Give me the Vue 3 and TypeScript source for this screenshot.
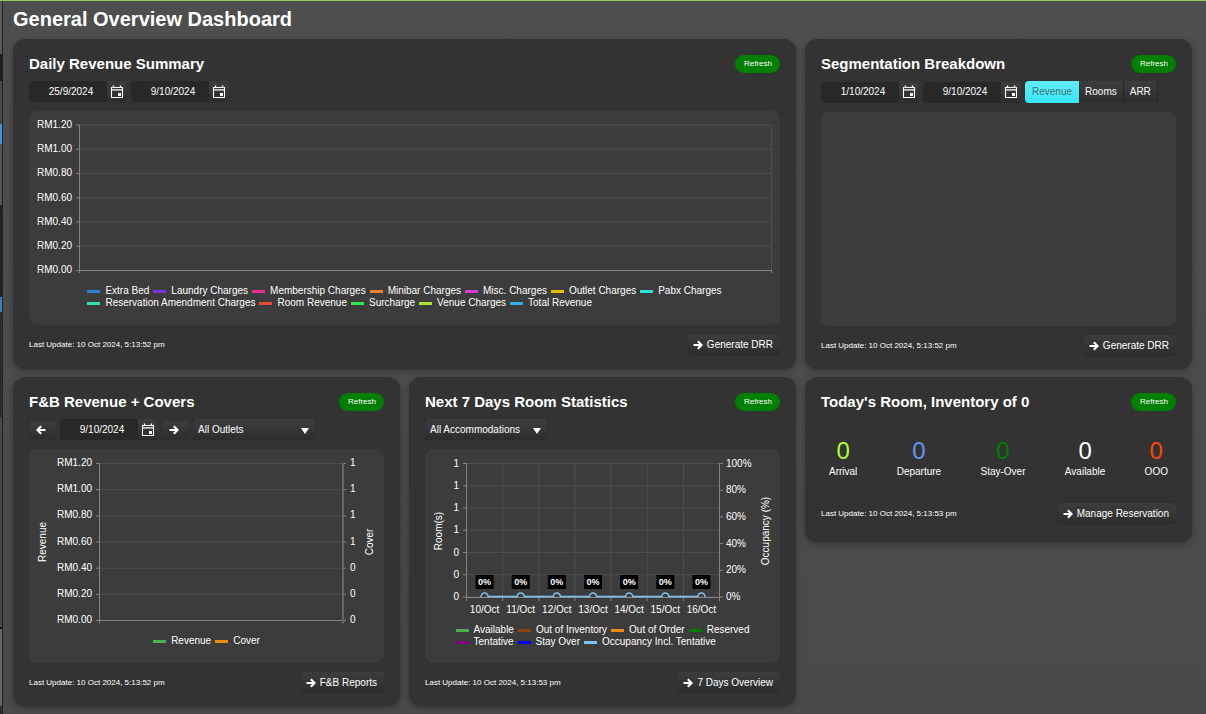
<script setup lang="ts">
import { ref } from 'vue'

interface LegendEntry {
  label: string
  color: string
}

const dailyFrom = ref('25/9/2024')
const dailyTo = ref('9/10/2024')
const segmentFrom = ref('1/10/2024')
const segmentTo = ref('9/10/2024')
const outletDate = ref('9/10/2024')
const outlet = ref('All Outlets')
const accommodation = ref('All Accommodations')

const segments: string[] = ['Revenue', 'Rooms', 'ARR']
const activeSegment = ref('Revenue')

const moneyLabels: string[] = ['RM1.20', 'RM1.00', 'RM0.80', 'RM0.60', 'RM0.40', 'RM0.20', 'RM0.00']
const coverLabels: string[] = ['1', '1', '1', '1', '0', '0', '0']
const percentLabels: string[] = ['100%', '80%', '60%', '40%', '20%', '0%']
const days: string[] = ['10/Oct', '11/Oct', '12/Oct', '13/Oct', '14/Oct', '15/Oct', '16/Oct']

const dailyLegend: LegendEntry[][] = [
  [
    { label: 'Extra Bed', color: '#2f7ed8' },
    { label: 'Laundry Charges', color: '#7d33e0' },
    { label: 'Membership Charges', color: '#e8308c' },
    { label: 'Minibar Charges', color: '#e8812e' },
    { label: 'Misc. Charges', color: '#e035d8' },
    { label: 'Outlet Charges', color: '#e6bd10' },
    { label: 'Pabx Charges', color: '#2fe0e0' },
  ],
  [
    { label: 'Reservation Amendment Charges', color: '#2fe0b5' },
    { label: 'Room Revenue', color: '#e84c2e' },
    { label: 'Surcharge', color: '#2fe84c' },
    { label: 'Venue Charges', color: '#a8e62e' },
    { label: 'Total Revenue', color: '#2fb4e8' },
  ],
]

const outletLegend: LegendEntry[][] = [
  [
    { label: 'Revenue', color: '#4caf50' },
    { label: 'Cover', color: '#f08a0c' },
  ],
]

const roomLegend: LegendEntry[][] = [
  [
    { label: 'Available', color: '#4caf50' },
    { label: 'Out of Inventory', color: '#8b4513' },
    { label: 'Out of Order', color: '#f08a0c' },
    { label: 'Reserved', color: '#007d00' },
  ],
  [
    { label: 'Tentative', color: '#800080' },
    { label: 'Stay Over', color: '#0000f5' },
    { label: 'Occupancy Incl. Tentative', color: '#7cc4f5' },
  ],
]

const stats = [
  { label: 'Arrival', value: 0, tone: 'lime' },
  { label: 'Departure', value: 0, tone: 'blue' },
  { label: 'Stay-Over', value: 0, tone: 'green' },
  { label: 'Available', value: 0, tone: 'white' },
  { label: 'OOO', value: 0, tone: 'orange' },
]

const dayX = (i: number): number => 41.5 + (253 / 7) * (i + 0.5)
const occupancyPath: string =
  'M55.5 147.5 ' +
  days.map((_, i) => `H${dayX(i) - 3.5} a3.5 3.5 0 0 1 7 0`).join(' ') +
  ` H${dayX(6) + 4}`
</script>

<template>
  <div class="shell">
    <svg class="defs" width="0" height="0" aria-hidden="true">
      <symbol id="cal" viewBox="0 0 14 14">
        <path d="M1.5 2.5H12.5V12.5H1.5Z" fill="none" stroke="currentColor" stroke-width="1.1" />
        <path d="M1.5 4.9H12.5" stroke="currentColor" stroke-width="1.1" />
        <path d="M3.5 0.5V3M10.5 0.5V3" stroke="currentColor" stroke-width="1.4" />
        <path d="M8 8H11V11H8Z" fill="currentColor" />
      </symbol>
      <symbol id="arrow" viewBox="0 0 10 10">
        <path d="M0.5 5H8.4M4.8 1.2L8.6 5L4.8 8.8" fill="none" stroke="currentColor" stroke-width="2.1" />
      </symbol>
    </svg>

    <aside class="rail"></aside>

    <main class="page">
      <h1>General Overview Dashboard</h1>

      <div class="grid">
        <section class="card wide">
          <header>
            <h2>Daily Revenue Summary</h2>
            <button type="button" class="refresh">Refresh</button>
          </header>
          <div class="controls">
            <div class="date">
              <input v-model="dailyFrom" type="text" aria-label="From date" />
              <button type="button" aria-label="Open calendar"><svg><use href="#cal" /></svg></button>
            </div>
            <div class="date">
              <input v-model="dailyTo" type="text" aria-label="To date" />
              <button type="button" aria-label="Open calendar"><svg><use href="#cal" /></svg></button>
            </div>
          </div>
          <div class="panel">
            <svg class="chart" viewBox="0 0 751 174">
              <g v-for="(label, i) in moneyLabels" :key="i">
                <line class="gridline" x1="51" x2="742" :y1="14 + i * 24.25" :y2="14 + i * 24.25" />
                <line class="axis" x1="47" x2="51" :y1="14 + i * 24.25" :y2="14 + i * 24.25" />
                <text x="43" :y="17 + i * 24.2" text-anchor="end">{{ label }}</text>
              </g>
              <path class="gridline" d="M742.5 14V159" />
              <path class="axis" d="M50.5 14V162M50 159.5H743M742.5 159V162" />
            </svg>
            <div class="legend">
              <div v-for="(row, r) in dailyLegend" :key="r" class="legend-row">
                <span v-for="item in row" :key="item.label"><i :style="{ background: item.color }"></i>{{ item.label }}</span>
              </div>
            </div>
          </div>
          <footer>
            <small>Last Update: 10 Oct 2024, 5:13:52 pm</small>
            <button type="button" class="action"><svg><use href="#arrow" /></svg>Generate DRR</button>
          </footer>
        </section>

        <section class="card">
          <header>
            <h2>Segmentation Breakdown</h2>
            <button type="button" class="refresh">Refresh</button>
          </header>
          <div class="controls">
            <div class="date">
              <input v-model="segmentFrom" type="text" aria-label="From date" />
              <button type="button" aria-label="Open calendar"><svg><use href="#cal" /></svg></button>
            </div>
            <div class="date">
              <input v-model="segmentTo" type="text" aria-label="To date" />
              <button type="button" aria-label="Open calendar"><svg><use href="#cal" /></svg></button>
            </div>
            <div class="segments">
              <button
                v-for="name in segments"
                :key="name"
                type="button"
                :class="{ active: name === activeSegment }"
                @click="activeSegment = name"
              >{{ name }}</button>
            </div>
          </div>
          <div class="panel"></div>
          <footer>
            <small>Last Update: 10 Oct 2024, 5:13:52 pm</small>
            <button type="button" class="action"><svg><use href="#arrow" /></svg>Generate DRR</button>
          </footer>
        </section>

        <section class="card">
          <header>
            <h2>F&amp;B Revenue + Covers</h2>
            <button type="button" class="refresh">Refresh</button>
          </header>
          <div class="controls">
            <button type="button" class="step" aria-label="Previous day"><svg class="flip"><use href="#arrow" /></svg></button>
            <div class="date">
              <input v-model="outletDate" type="text" aria-label="Date" />
              <button type="button" aria-label="Open calendar"><svg><use href="#cal" /></svg></button>
            </div>
            <button type="button" class="step" aria-label="Next day"><svg><use href="#arrow" /></svg></button>
            <select v-model="outlet" aria-label="Outlet">
              <option>All Outlets</option>
            </select>
          </div>
          <div class="panel">
            <svg class="chart" viewBox="0 0 355 186">
              <g v-for="(label, i) in moneyLabels" :key="i">
                <line class="gridline" x1="71" x2="313" :y1="14.5 + i * 26.17" :y2="14.5 + i * 26.17" />
                <path class="axis" :d="`M67 ${14.5 + i * 26.17}H71M314 ${14.5 + i * 26.17}H317`" />
                <text x="63" :y="17 + i * 26.17" text-anchor="end">{{ label }}</text>
                <text x="321" :y="17 + i * 26.17">{{ coverLabels[i] }}</text>
              </g>
              <path class="axis" d="M70.5 14V174.5M70 171.5H317" />
              <path class="axis-wide" d="M314 14V174.5" />
              <text transform="translate(17 93) rotate(-90)" text-anchor="middle">Revenue</text>
              <text transform="translate(344 93) rotate(-90)" text-anchor="middle">Cover</text>
            </svg>
            <div class="legend">
              <div v-for="(row, r) in outletLegend" :key="r" class="legend-row">
                <span v-for="item in row" :key="item.label"><i :style="{ background: item.color }"></i>{{ item.label }}</span>
              </div>
            </div>
          </div>
          <footer>
            <small>Last Update: 10 Oct 2024, 5:13:52 pm</small>
            <button type="button" class="action"><svg><use href="#arrow" /></svg>F&amp;B Reports</button>
          </footer>
        </section>

        <section class="card">
          <header>
            <h2>Next 7 Days Room Statistics</h2>
            <button type="button" class="refresh">Refresh</button>
          </header>
          <div class="controls">
            <select v-model="accommodation" aria-label="Accommodation">
              <option>All Accommodations</option>
            </select>
          </div>
          <div class="panel">
            <svg class="chart" viewBox="0 0 355 175">
              <g v-for="(label, i) in coverLabels" :key="i">
                <line class="gridline" x1="42" x2="294" :y1="14.5 + i * 22.25" :y2="14.5 + i * 22.25" />
                <line class="axis" x1="38" x2="42" :y1="14.5 + i * 22.25" :y2="14.5 + i * 22.25" />
                <text x="34" :y="17.5 + i * 22.25" text-anchor="end">{{ label }}</text>
              </g>
              <g v-for="(label, i) in percentLabels" :key="label">
                <line class="axis" x1="294" x2="298" :y1="14.5 + i * 26.7" :y2="14.5 + i * 26.7" />
                <text x="301" :y="17.5 + i * 26.7">{{ label }}</text>
              </g>
              <g v-for="i in 6" :key="i">
                <path class="gridline" :d="`M${41.5 + (i * 253) / 7} 14V148`" />
                <path class="axis" :d="`M${41.5 + (i * 253) / 7} 148V152`" />
              </g>
              <path class="axis" d="M41.5 14V152M294.5 14V152M41 148.5H295" />
              <path class="occupancy" :d="occupancyPath" />
              <g v-for="(day, i) in days" :key="day">
                <rect :x="dayX(i) - 9" y="126" width="18" height="14" />
                <text class="value" :x="dayX(i)" y="136" text-anchor="middle">0%</text>
                <text :x="dayX(i)" y="164" text-anchor="middle">{{ day }}</text>
              </g>
              <text transform="translate(17 82) rotate(-90)" text-anchor="middle">Room(s)</text>
              <text transform="translate(344 82) rotate(-90)" text-anchor="middle">Occupancy (%)</text>
            </svg>
            <div class="legend">
              <div v-for="(row, r) in roomLegend" :key="r" class="legend-row">
                <span v-for="item in row" :key="item.label"><i :style="{ background: item.color }"></i>{{ item.label }}</span>
              </div>
            </div>
          </div>
          <footer>
            <small>Last Update: 10 Oct 2024, 5:13:53 pm</small>
            <button type="button" class="action"><svg><use href="#arrow" /></svg>7 Days Overview</button>
          </footer>
        </section>

        <section class="card short">
          <header>
            <h2>Today's Room, Inventory of 0</h2>
            <button type="button" class="refresh">Refresh</button>
          </header>
          <div class="stats">
            <div v-for="stat in stats" :key="stat.label" class="stat">
              <strong :class="stat.tone">{{ stat.value }}</strong>
              <span>{{ stat.label }}</span>
            </div>
          </div>
          <footer>
            <small>Last Update: 10 Oct 2024, 5:13:53 pm</small>
            <button type="button" class="action"><svg><use href="#arrow" /></svg>Manage Reservation</button>
          </footer>
        </section>
      </div>
    </main>
  </div>
</template>

<style>
body {
  margin: 0;
  background: #4b4b4b;
}
</style>

<style scoped>
.shell {
  display: flex;
  box-sizing: border-box;
  min-height: 100vh;
  border-top: 1px solid #8fcb4c;
  background: linear-gradient(#4e4e4e, #4a4a4a);
  color: #fff;
  font: 10px/12px "Liberation Sans", Arial, sans-serif;
}

.defs {
  position: absolute;
}

.rail {
  flex: none;
  width: 2px;
  border-right: 1px solid #222;
  background: linear-gradient(
    #5a5a5a 0 53px, #1e1e1e 53px 80px, #484848 80px 123px, #3a96dd 123px 143px,
    #565656 143px 204px, #222 204px 296px, #3a7fbb 296px 311px, #2a2a2a 311px 416px,
    #484848 416px 626px, #111 626px 628px, #666 628px 705px, #263030 705px
  );
}

.page {
  flex: 1;
  min-width: 0;
  padding: 6px 14px 7px 10px;
}

h1,
h2 {
  margin: 0;
  font-weight: 700;
}

h1 {
  font-size: 20px;
  line-height: 24px;
}

.grid {
  display: grid;
  grid-template-columns: repeat(3, minmax(0, 1fr));
  align-items: stretch;
  gap: 8px 9px;
  margin-top: 8px;
}

.card {
  box-sizing: border-box;
  min-width: 0;
  padding: 16px 16px 13px;
  border-radius: 12px;
  background: #333;
  box-shadow: 0 2px 6px rgba(0, 0, 0, 0.3);
}

.wide {
  grid-column: span 2;
}

.short {
  align-self: start;
  padding-bottom: 18px;
}

header,
footer {
  display: flex;
  align-items: center;
  justify-content: space-between;
}

header {
  height: 18px;
}

h2 {
  font-size: 15px;
  line-height: 18px;
  white-space: nowrap;
}

button,
input,
select {
  box-sizing: border-box;
  margin: 0;
  border: 0;
  color: #fff;
  font: inherit;
}

.refresh {
  height: 18px;
  padding: 0 8px 0 9px;
  border-radius: 9px;
  background: #008000;
  font-size: 8px;
}

.controls {
  display: flex;
  align-items: center;
  gap: 4px;
  margin: 8px 0 9px;
}

.date {
  display: flex;
  width: 98px;
  height: 21px;
  overflow: hidden;
  border-radius: 4px;
  background: #282828;
}

.date input {
  flex: 1;
  min-width: 0;
  padding: 0 0 0 6px;
  background: none;
  text-align: center;
}

.date button,
.step,
.action,
.segments button,
select {
  background: linear-gradient(#3c3c3c, #343434 60%, #2c2c2c);
}

.date button {
  display: grid;
  place-items: center;
  width: 20px;
  padding: 0;
}

.date svg {
  width: 14px;
  height: 14px;
}

.step {
  display: grid;
  place-items: center;
  width: 27px;
  height: 18px;
  padding: 0 4px 0 0;
  border-radius: 3px;
  box-shadow: 0 0 1px #1c1c1c;
}

.step svg,
.action svg {
  width: 10px;
  height: 10px;
}

.flip {
  transform: rotate(180deg);
}

select {
  width: 122px;
  height: 21px;
  padding: 0 20px 0 5px;
  border-radius: 4px;
  appearance: none;
  background:
    url("data:image/svg+xml,%3Csvg xmlns='http://www.w3.org/2000/svg' viewBox='0 0 8 6'%3E%3Cpath d='M0 0H8L4 6Z' fill='white'/%3E%3C/svg%3E") right 6px top 9px / 8px 6px no-repeat,
    linear-gradient(#3c3c3c, #343434 60%, #2c2c2c);
  box-shadow: 0 0 1px #1c1c1c;
}

.segments {
  display: flex;
  height: 22px;
  border-radius: 4px;
  overflow: hidden;
}

.segments button {
  padding: 0 6px;
  border-right: 1px solid #262626;
}

.segments .active {
  padding: 0 7px;
  border-right: 0;
  background: linear-gradient(#62eef8, #38e6f6);
  color: #3d7378;
}

.panel {
  min-height: 214px;
  border-radius: 8px;
  background: #3c3c3c;
}

.chart {
  display: block;
  width: 100%;
  height: auto;
}

.chart text {
  fill: #fff;
  font-size: 10px;
}

.chart .value {
  font-size: 9px;
  font-weight: 700;
}

.gridline {
  fill: none;
  stroke: #4e4e4e;
}

.axis {
  fill: none;
  stroke: #858585;
}

.axis-wide {
  stroke: #666;
  stroke-width: 2;
}

.occupancy {
  fill: none;
  stroke: #7cc4f5;
  stroke-width: 1.5;
}

.legend {
  width: fit-content;
  margin: 0 auto;
}

.legend-row {
  display: flex;
  gap: 4px;
  white-space: nowrap;
}

.legend-row span {
  display: flex;
  align-items: center;
  gap: 5px;
}

.legend-row i {
  width: 13px;
  height: 3px;
}

footer {
  margin-top: 9px;
}

small {
  font-size: 8px;
}

.action {
  display: flex;
  align-items: center;
  gap: 4px;
  height: 21px;
  padding: 0 7px 0 5px;
  border-radius: 3px;
  box-shadow: 0 0 1px #1c1c1c;
}

.stats {
  display: flex;
  justify-content: space-between;
  margin: 28px 0 25px;
  padding: 0 8px;
}

.stat {
  display: flex;
  flex-direction: column;
  align-items: center;
  gap: 3px;
}

.stat strong {
  font-size: 24px;
  font-weight: 400;
  line-height: 24px;
}

.lime {
  color: #adff2f;
}

.blue {
  color: #6495ed;
}

.green {
  color: #008000;
}

.white {
  color: #fff;
}

.orange {
  color: #ff4500;
}
</style>
